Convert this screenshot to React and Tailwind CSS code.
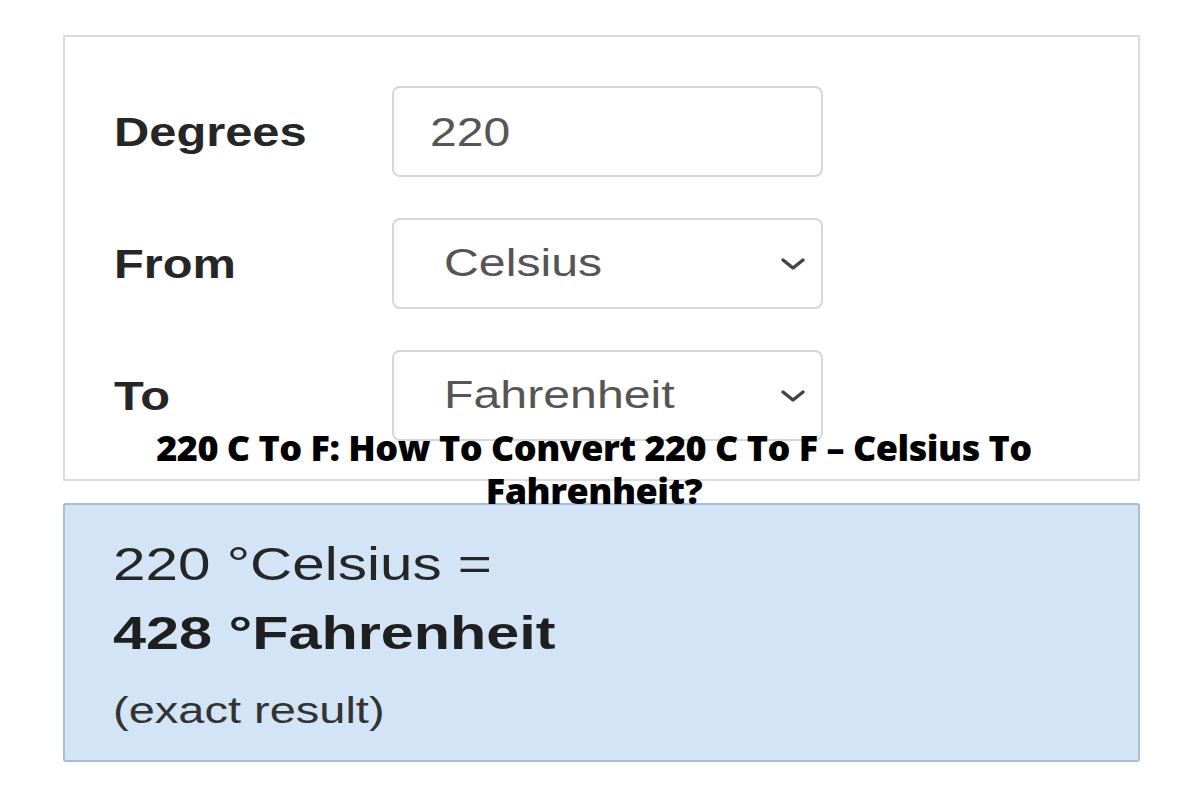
import React from 'react';

const stretch = 'inline-block origin-left scale-x-[1.27] whitespace-nowrap';

const Chevron = () => (
  <svg width="32" height="14" viewBox="0 0 32 14" className="shrink-0">
    <path d="M6 3 L16 11 L26 3" fill="none" stroke="#444" strokeWidth="3.5" strokeLinecap="round" strokeLinejoin="round" />
  </svg>
);

const Row = ({ label, children }) => (
  <div className="flex items-center h-[91px]">
    <div className="w-[278px] text-[40px] font-bold text-[#262626]">
      <span className="inline-block origin-left scale-x-[1.22] whitespace-nowrap">{label}</span>
    </div>
    {children}
  </div>
);

const App = () => {
  return (
    <div className="relative w-[1200px] h-[800px] bg-white overflow-hidden font-['Liberation_Sans',Arial,sans-serif]">
      <div className="flex flex-col gap-[22px] px-[63px] pt-[35px]">
        <div className="w-[1077px] h-[446px] border-2 border-[#dcdcdc] bg-white pt-[49px] pl-[49px] flex flex-col gap-[41px]">
          <Row label="Degrees">
            <div className="w-[431px] h-[91px] rounded-lg border-2 border-[#d4d8dc] flex items-center pl-[36px] text-[40px] text-[#555]">
              <span className="inline-block origin-left scale-x-[1.2] whitespace-nowrap">220</span>
            </div>
          </Row>
          <Row label="From">
            <div className="w-[431px] h-[91px] rounded-lg border-2 border-[#d4d8dc] flex items-center justify-between pl-[50px] pr-[12px] text-[38px] text-[#555]">
              <span className={stretch}>Celsius</span>
              <Chevron />
            </div>
          </Row>
          <Row label="To">
            <div className="w-[431px] h-[91px] rounded-lg border-2 border-[#d4d8dc] flex items-center justify-between pl-[50px] pr-[12px] text-[38px] text-[#555]">
              <span className={stretch}>Fahrenheit</span>
              <Chevron />
            </div>
          </Row>
        </div>

        <div className="w-[1077px] h-[259px] rounded-[3px] border-2 border-[#a9bdd3] bg-[#d2e4f5] pl-[48px] pt-[30px] flex flex-col text-[#262626]">
          <div className="h-[58px] flex items-center text-[46px]">
            <span className={stretch}>220 °Celsius =</span>
          </div>
          <div className="h-[80px] flex items-center text-[46px] font-bold text-[#1f1f1f]">
            <span className="inline-block origin-left scale-x-[1.29] whitespace-nowrap">428 °Fahrenheit</span>
          </div>
          <div className="h-[76px] flex items-center text-[37px] text-[#333]">
            <span className={stretch}>(exact result)</span>
          </div>
        </div>
      </div>

      <h1 className="absolute left-0 right-0 top-[426px] pr-[12px] text-center text-[36px] leading-[43px] font-extrabold tracking-[-0.5px] text-black font-['Open_Sans',sans-serif]">
        220 C To F: How To Convert 220 C To F – Celsius To
        <br />
        Fahrenheit?
      </h1>
    </div>
  );
};

export default App;
